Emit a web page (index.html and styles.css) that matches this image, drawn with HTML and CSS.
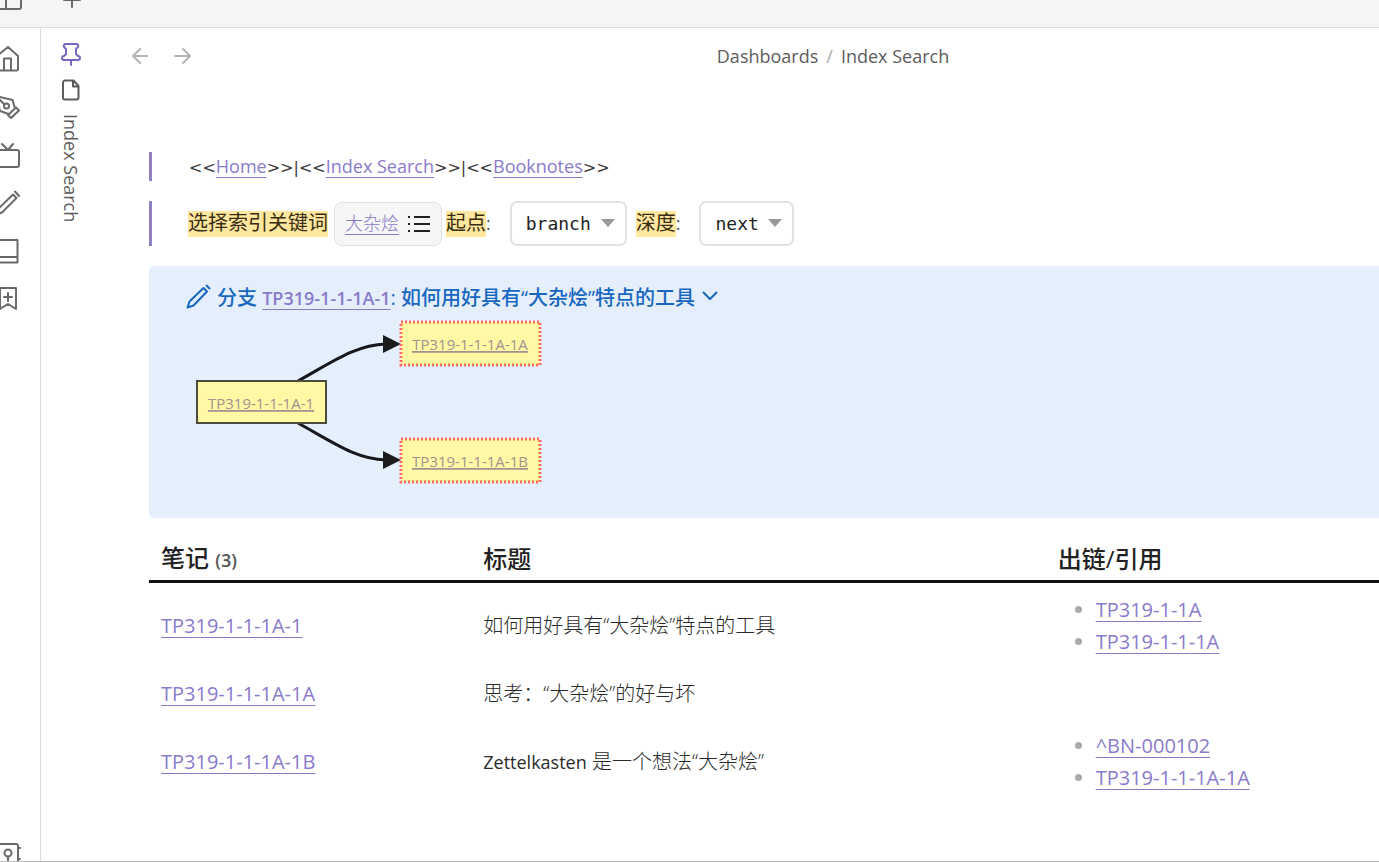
FILE: index.html
```html
<!DOCTYPE html>
<html lang="zh-CN">
<head>
<meta charset="utf-8">
<title>Index Search</title>
<link rel="stylesheet" href="styles.css">
</head>
<body>
<div class="app">
  <header class="titlebar">
    <button class="icon-btn" aria-label="Toggle sidebar"><svg class="icon" viewBox="0 0 28 28"><rect x="2" y="3" width="25" height="20" rx="2"/><path d="M12 3v20M2 13h25"/></svg></button>
    <button class="icon-btn" aria-label="New tab"><svg class="icon" viewBox="0 0 28 28"><path d="M14 5v16M6 14h16"/></svg></button>
  </header>
  <div class="workspace">
    <nav class="ribbon">
      <button class="icon-btn" aria-label="Home"><svg class="icon" viewBox="0 0 28 28"><path d="M3 11 14 2l10 9v13a1.500 1.500 0 0 1-1.500 1.500h-17A1.500 1.500 0 0 1 4 24V11M10 25V13.500h7V25"/></svg></button>
      <button class="icon-btn" aria-label="Pen"><svg class="icon" viewBox="0 0 28 28"><path d="m14 22 8-7.500 3 3-8 7.500zM21 15.500 18.500 7 2 3l4 15 8.500 3M2 3l8.500 8.500"/><circle cx="12.500" cy="13" r="2.500"/></svg></button>
      <button class="icon-btn" aria-label="Media"><svg class="icon" viewBox="0 0 28 28"><rect x="2" y="9" width="23" height="17" rx="2"/><path d="m8 3 6 6 5-6"/></svg></button>
      <button class="icon-btn" aria-label="Edit"><svg class="icon" viewBox="0 0 28 28"><path d="m19 5.500 3.500 3.500L8 23.500l-6 2 2-5.500zM21 2.500l4 4.500"/></svg></button>
      <button class="icon-btn" aria-label="Book"><svg class="icon" viewBox="0 0 28 28"><path d="M2 3h21.500v22.500H4a2 2 0 0 1-2-2zM2 20h21.500"/></svg></button>
      <button class="icon-btn" aria-label="Add bookmark"><svg class="icon" viewBox="0 0 28 28"><path d="M6 3h16v21l-8-5-8 5zM14 8v8M10 12h8"/></svg></button>
      <button class="icon-btn vault" aria-label="Open vault"><svg class="icon" viewBox="0 0 28 28"><rect x="2" y="3" width="22" height="22" rx="2"/><circle cx="14" cy="12" r="3.500"/><path d="M14 15.500v4M24 7h2M24 18h2"/></svg></button>
    </nav>
    <aside class="tab">
      <svg class="icon pin" viewBox="0 0 20 24"><path d="M5 2h10a2 2 0 0 1 2 3l-2 2v5l2 2a2 2 0 0 1 0 4H3a2 2 0 0 1 0-4l2-2V7L3 5a2 2 0 0 1 2-3zM10 18v5"/></svg>
      <svg class="icon page" viewBox="0 0 20 24"><path d="M4 2.500h8.500l5 5.500v11.500a2 2 0 0 1-2 2H4a2 2 0 0 1-2-2v-15a2 2 0 0 1 2-2zM12 3v5.500h5"/></svg>
      <span class="tab-title">Index Search</span>
    </aside>
    <main class="view">
      <div class="view-header">
        <div class="history">
          <button class="icon-btn" aria-label="Back"><svg class="arrow" viewBox="0 0 18 18"><path d="M16 9H2M9 2 2 9l7 7"/></svg></button>
          <button class="icon-btn" aria-label="Forward"><svg class="arrow" viewBox="0 0 18 18"><path d="M2 9h15M10 2l7 7-7 7"/></svg></button>
        </div>
        <div class="crumbs"><span>Dashboards</span><span class="slash">/</span><span>Index Search</span></div>
      </div>
      <div class="note">
        <blockquote class="quote links"><span class="mark">&lt;&lt;</span><a href="#home">Home</a><span class="mark">&gt;&gt;|&lt;&lt;</span><a href="#index">Index Search</a><span class="mark">&gt;&gt;|&lt;&lt;</span><a href="#booknotes">Booknotes</a><span class="mark">&gt;&gt;</span></blockquote>
        <blockquote class="quote filters">
          <mark>选择索引关键词</mark>
          <span class="keyword"><a href="#keyword">大杂烩</a><svg class="list-icon" viewBox="0 0 24 20"><path d="M7 3h16M7 10h16M7 17h16M1 3h2M1 10h2M1 17h2"/></svg></span>
          <label for="start"><mark>起点</mark>:</label>
          <span class="pick"><select id="start" class="start"><option>branch</option></select></span>
          <label for="depth"><mark>深度</mark>:</label>
          <span class="pick"><select id="depth" class="depth"><option>next</option></select></span>
        </blockquote>
        <section class="callout">
          <div class="callout-title">
            <svg class="pencil" viewBox="0 0 26 26"><path d="m17.500 5 3.500 3.500L7.500 22.500 1.500 24.500l2-6zM20 2l4 4"/></svg>
            <span>分支 <a href="#root">TP319-1-1-1A-1</a>: 如何用好具有“大杂烩”特点的工具</span>
            <svg class="chevron" viewBox="0 0 18 12"><path d="m2 2 7 7 7-7"/></svg>
          </div>
          <svg class="graph" width="360" height="170" viewBox="0 0 360 170">
            <path class="edge" d="M110 61C146 41 168 25 198 24M110 103c36 20 58 36 88 37"/>
            <path class="head" d="M195 15v18l18-9zM195 131v18l18-9z"/>
            <rect class="node root" x="9" y="61" width="129" height="42"/>
            <rect class="node leaf" x="213" y="2" width="139" height="43"/>
            <rect class="node leaf" x="213" y="119" width="139" height="43"/>
            <a href="#root"><text x="73" y="89">TP319-1-1-1A-1</text></a>
            <a href="#a"><text x="282" y="30">TP319-1-1-1A-1A</text></a>
            <a href="#b"><text x="282" y="147">TP319-1-1-1A-1B</text></a>
          </svg>
        </section>
        <table class="notes">
          <thead><tr><th class="c-note">笔记 <small>(3)</small></th><th class="c-title">标题</th><th>出链/引用</th></tr></thead>
          <tbody>
            <tr><td><a href="#root">TP319-1-1-1A-1</a></td><td>如何用好具有“大杂烩”特点的工具</td><td><ul><li><a href="#1">TP319-1-1A</a></li><li><a href="#2">TP319-1-1-1A</a></li></ul></td></tr>
            <tr><td><a href="#a">TP319-1-1-1A-1A</a></td><td>思考：“大杂烩”的好与坏</td><td></td></tr>
            <tr><td><a href="#b">TP319-1-1-1A-1B</a></td><td><span class="latin">Zettelkasten</span> 是一个想法“大杂烩”</td><td><ul><li><a href="#3">^BN-000102</a></li><li><a href="#4">TP319-1-1-1A-1A</a></li></ul></td></tr>
          </tbody>
        </table>
      </div>
    </main>
  </div>
</div>
</body>
</html>
```
FILE: styles.css
```css
* { box-sizing: border-box; }
body {
  margin: 0;
  font-family: "Open Sans", "Noto Sans CJK SC", sans-serif;
  font-size: 18px;
  color: #2a2a2a;
  background: #fff;
}
.app { height: 100vh; display: flex; flex-direction: column; overflow: hidden; border-bottom: 1px solid #bbb; }
a { color: #8a7bca; text-decoration: underline; text-decoration-thickness: 1px; text-underline-offset: 4px; }
.icon-btn { display: flex; flex: none; padding: 0; border: 0; background: none; color: #6a6a6a; }
.icon { width: 28px; height: 28px; fill: none; stroke: currentColor; stroke-width: 2; stroke-linejoin: round; stroke-linecap: round; }
.titlebar { height: 28px; flex: none; display: flex; gap: 36px; align-items: flex-end; padding-bottom: 13px; margin-left: -6px; background: #f5f5f5; border-bottom: 1px solid #dcdcdc; }
.workspace { flex: 1; min-height: 0; display: flex; }
.ribbon { width: 47px; flex: none; margin-left: -6px; padding-top: 17px; display: flex; flex-direction: column; gap: 20px; border-right: 1px solid #dcdcdc; }
.vault { margin-top: auto; margin-bottom: -8px; }
.tab { width: 60px; flex: none; display: flex; flex-direction: column; align-items: center; padding-top: 14px; gap: 12px; color: #5c5c5c; }
.tab .icon { width: 20px; height: 24px; flex: none; }
.tab .pin { color: #7a66c0; }
.tab-title { writing-mode: vertical-rl; }
.view { flex: 1; min-width: 0; overflow: hidden; }
.view-header { height: 56px; display: flex; align-items: center; padding-left: 30px; color: #5c5c5c; }
.history { display: flex; gap: 24px; }
.arrow { width: 18px; height: 18px; fill: none; stroke: #b4b4b4; stroke-width: 2; stroke-linecap: round; }
.crumbs { flex: 1; display: flex; justify-content: center; gap: 8px; padding-left: 96px; }
.slash { color: #aaa; }
.note { padding: 68px 0 0 48px; }
.quote { margin: 0 0 20px; border-left: 3px solid #9080c0; padding-left: 36px; }
.links { height: 29px; line-height: 29px; padding-left: 37px; white-space: nowrap; }
.mark { font-family: "DejaVu Sans", sans-serif; font-size: 16px; color: #3a3a3a; }
.filters { display: flex; align-items: center; height: 45px; white-space: nowrap; color: #555; }
mark { display: inline-block; height: 26px; line-height: 24px; background: #ffe79f; color: #3a2c10; font-size: 20px; }
.keyword { display: flex; align-items: center; gap: 8px; height: 44px; margin: 0 4px 0 6px; padding: 0 10px; border: 1px solid #e0e0e0; border-radius: 8px; background: #f6f6f6; font-weight: 300; }
.keyword a { padding-bottom: 4px; }
.list-icon { width: 24px; height: 20px; fill: none; stroke: #222; stroke-width: 2; }
.pick { position: relative; margin: 0 9px 0 19px; }
.pick::after { content: ""; position: absolute; right: 12px; top: 18px; border: 7px solid transparent; border-top: 8px solid #999; border-bottom: 0; pointer-events: none; }
select { appearance: none; display: block; height: 45px; padding: 0 14px; border: 2px solid #e2e2e2; border-radius: 7px; background: #fff; color: #222; font: 18px "DejaVu Sans Mono", monospace; }
.start { width: 117px; }
.depth { width: 95px; }
.callout { background: #e5effc; border-radius: 5px 0 0 5px; padding: 15px 0 28px 37px; }
.callout-title { display: flex; align-items: center; height: 30px; margin-bottom: 9px; color: #1767c0; font-size: 20px; font-weight: 500; white-space: nowrap; }
.callout-title a { font-size: 18px; font-weight: 600; }
.pencil { width: 26px; height: 26px; margin-right: 5px; fill: none; stroke: currentColor; stroke-width: 2; stroke-linejoin: round; }
.chevron { width: 18px; height: 12px; margin-left: 6px; fill: none; stroke: currentColor; stroke-width: 2; }
.graph { display: block; margin-left: 2px; }
.graph text { font-size: 15px; fill: #a3918f; text-anchor: middle; text-decoration: underline; }
.edge { fill: none; stroke: #16181c; stroke-width: 3; }
.head { fill: #1c1c1c; }
.node { fill: #fff8a5; }
.root { stroke: #4c4c38; stroke-width: 2; }
.leaf { stroke: #ff6b5c; stroke-width: 3; stroke-dasharray: 2 2; }
.notes { width: 100%; margin-top: 20px; table-layout: fixed; border-collapse: collapse; font-size: 20px; font-weight: 300; }
th { height: 43px; padding: 0 12px; border-bottom: 3px solid #111; font-size: 24px; line-height: 32px; font-weight: 500; text-align: left; color: #222; }
th small { font-size: 18px; font-weight: 600; color: #555; }
.c-note { width: 26.2%; }
.c-title { width: 46.7%; }
td { height: 50px; padding: 0 12px; line-height: 32px; }
td a, .latin { font-weight: 400; }
.latin { font-size: 18px; }
ul { margin: 0; padding: 11px 0 11px 38px; }
li::marker { color: #aaa; }
```
